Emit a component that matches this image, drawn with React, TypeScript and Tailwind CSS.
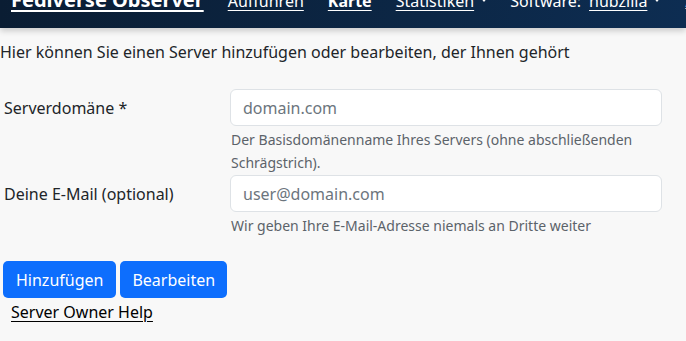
const font = { fontFamily: '"Noto Sans", "Open Sans", sans-serif' };

const Caret = () => (
  <span className="inline-block w-0 h-0 border-l-[4px] border-r-[4px] border-t-[5px] border-l-transparent border-r-transparent border-t-white mb-[4px]" />
);

const NavLink = ({ label, bold = false, caret = false }: any) => {
  return (
    <span className="flex items-center gap-[6px] whitespace-nowrap">
      <span className={`underline underline-offset-[3px] ${bold ? 'font-bold' : ''}`}>{label}</span>
      {caret && <Caret />}
    </span>
  );
};

const FormRow = ({ label, placeholder, help }: any) => {
  return (
    <div className="flex">
      <label className="w-[230px] h-[37px] flex items-center pl-[4px] text-[16px] text-[#212529]">
        {label}
      </label>
      <div className="w-[432px]">
        <div className="h-[37px] rounded-[6px] border border-[#dee2e6] bg-white flex items-center pl-[12px] text-[16px] text-[#6c757d]">
          {placeholder}
        </div>
        <div className="mt-[2px] text-[14px] leading-[23px] text-[#5c636a] pl-[1px]">{help}</div>
      </div>
    </div>
  );
};

export default function App() {
  return (
    <div className="w-[686px] h-[341px] overflow-hidden bg-[#f8f8f8]" style={font}>
      <nav className="relative z-10 -mt-[26px] h-[54px] flex items-center bg-gradient-to-r from-[#0a1d33] to-[#0d2d52] text-white shadow-[0_3px_6px_rgba(0,0,0,0.18)] whitespace-nowrap">
        <span className="ml-[11px] text-[20px] font-bold underline underline-offset-[3px] decoration-[2px] mt-[-2px]">
          Fediverse Observer
        </span>
        <div className="ml-[24px] flex items-center gap-[24px] text-[16px]">
          <NavLink label="Aufführen" />
          <NavLink label="Karte" bold />
          <NavLink label="Statistiken" caret />
          <span className="flex items-center gap-[8px] -ml-[2px]">
            <span>Software:</span>
            <NavLink label="hubzilla " caret />
          </span>
          <span className="underline">A</span>
        </div>
      </nav>
      <p className="mt-[12px] text-[16px] text-[#212529] leading-[24px]">
        Hier können Sie einen Server hinzufügen oder bearbeiten, der Ihnen gehört
      </p>
      <div className="mt-[25px] flex flex-col gap-[1px]">
        <FormRow
          label="Serverdomäne *"
          placeholder="domain.com"
          help="Der Basisdomänenname Ihres Servers (ohne abschließenden Schrägstrich)."
        />
        <FormRow
          label="Deine E-Mail (optional)"
          placeholder="user@domain.com"
          help="Wir geben Ihre E-Mail-Adresse niemals an Dritte weiter"
        />
      </div>
      <div className="mt-[24px] ml-[3px] flex gap-[4px]">
        <button className="h-[37px] px-[13px] rounded-[5px] bg-[#0d6efd] text-white text-[16px]">Hinzufügen</button>
        <button className="h-[37px] px-[12px] rounded-[5px] bg-[#0d6efd] text-white text-[16px]">Bearbeiten</button>
      </div>
      <a className="block mt-[2px] ml-[11px] text-[16px] leading-[24px] text-black underline underline-offset-[3px]">
        Server Owner Help
      </a>
    </div>
  );
}
